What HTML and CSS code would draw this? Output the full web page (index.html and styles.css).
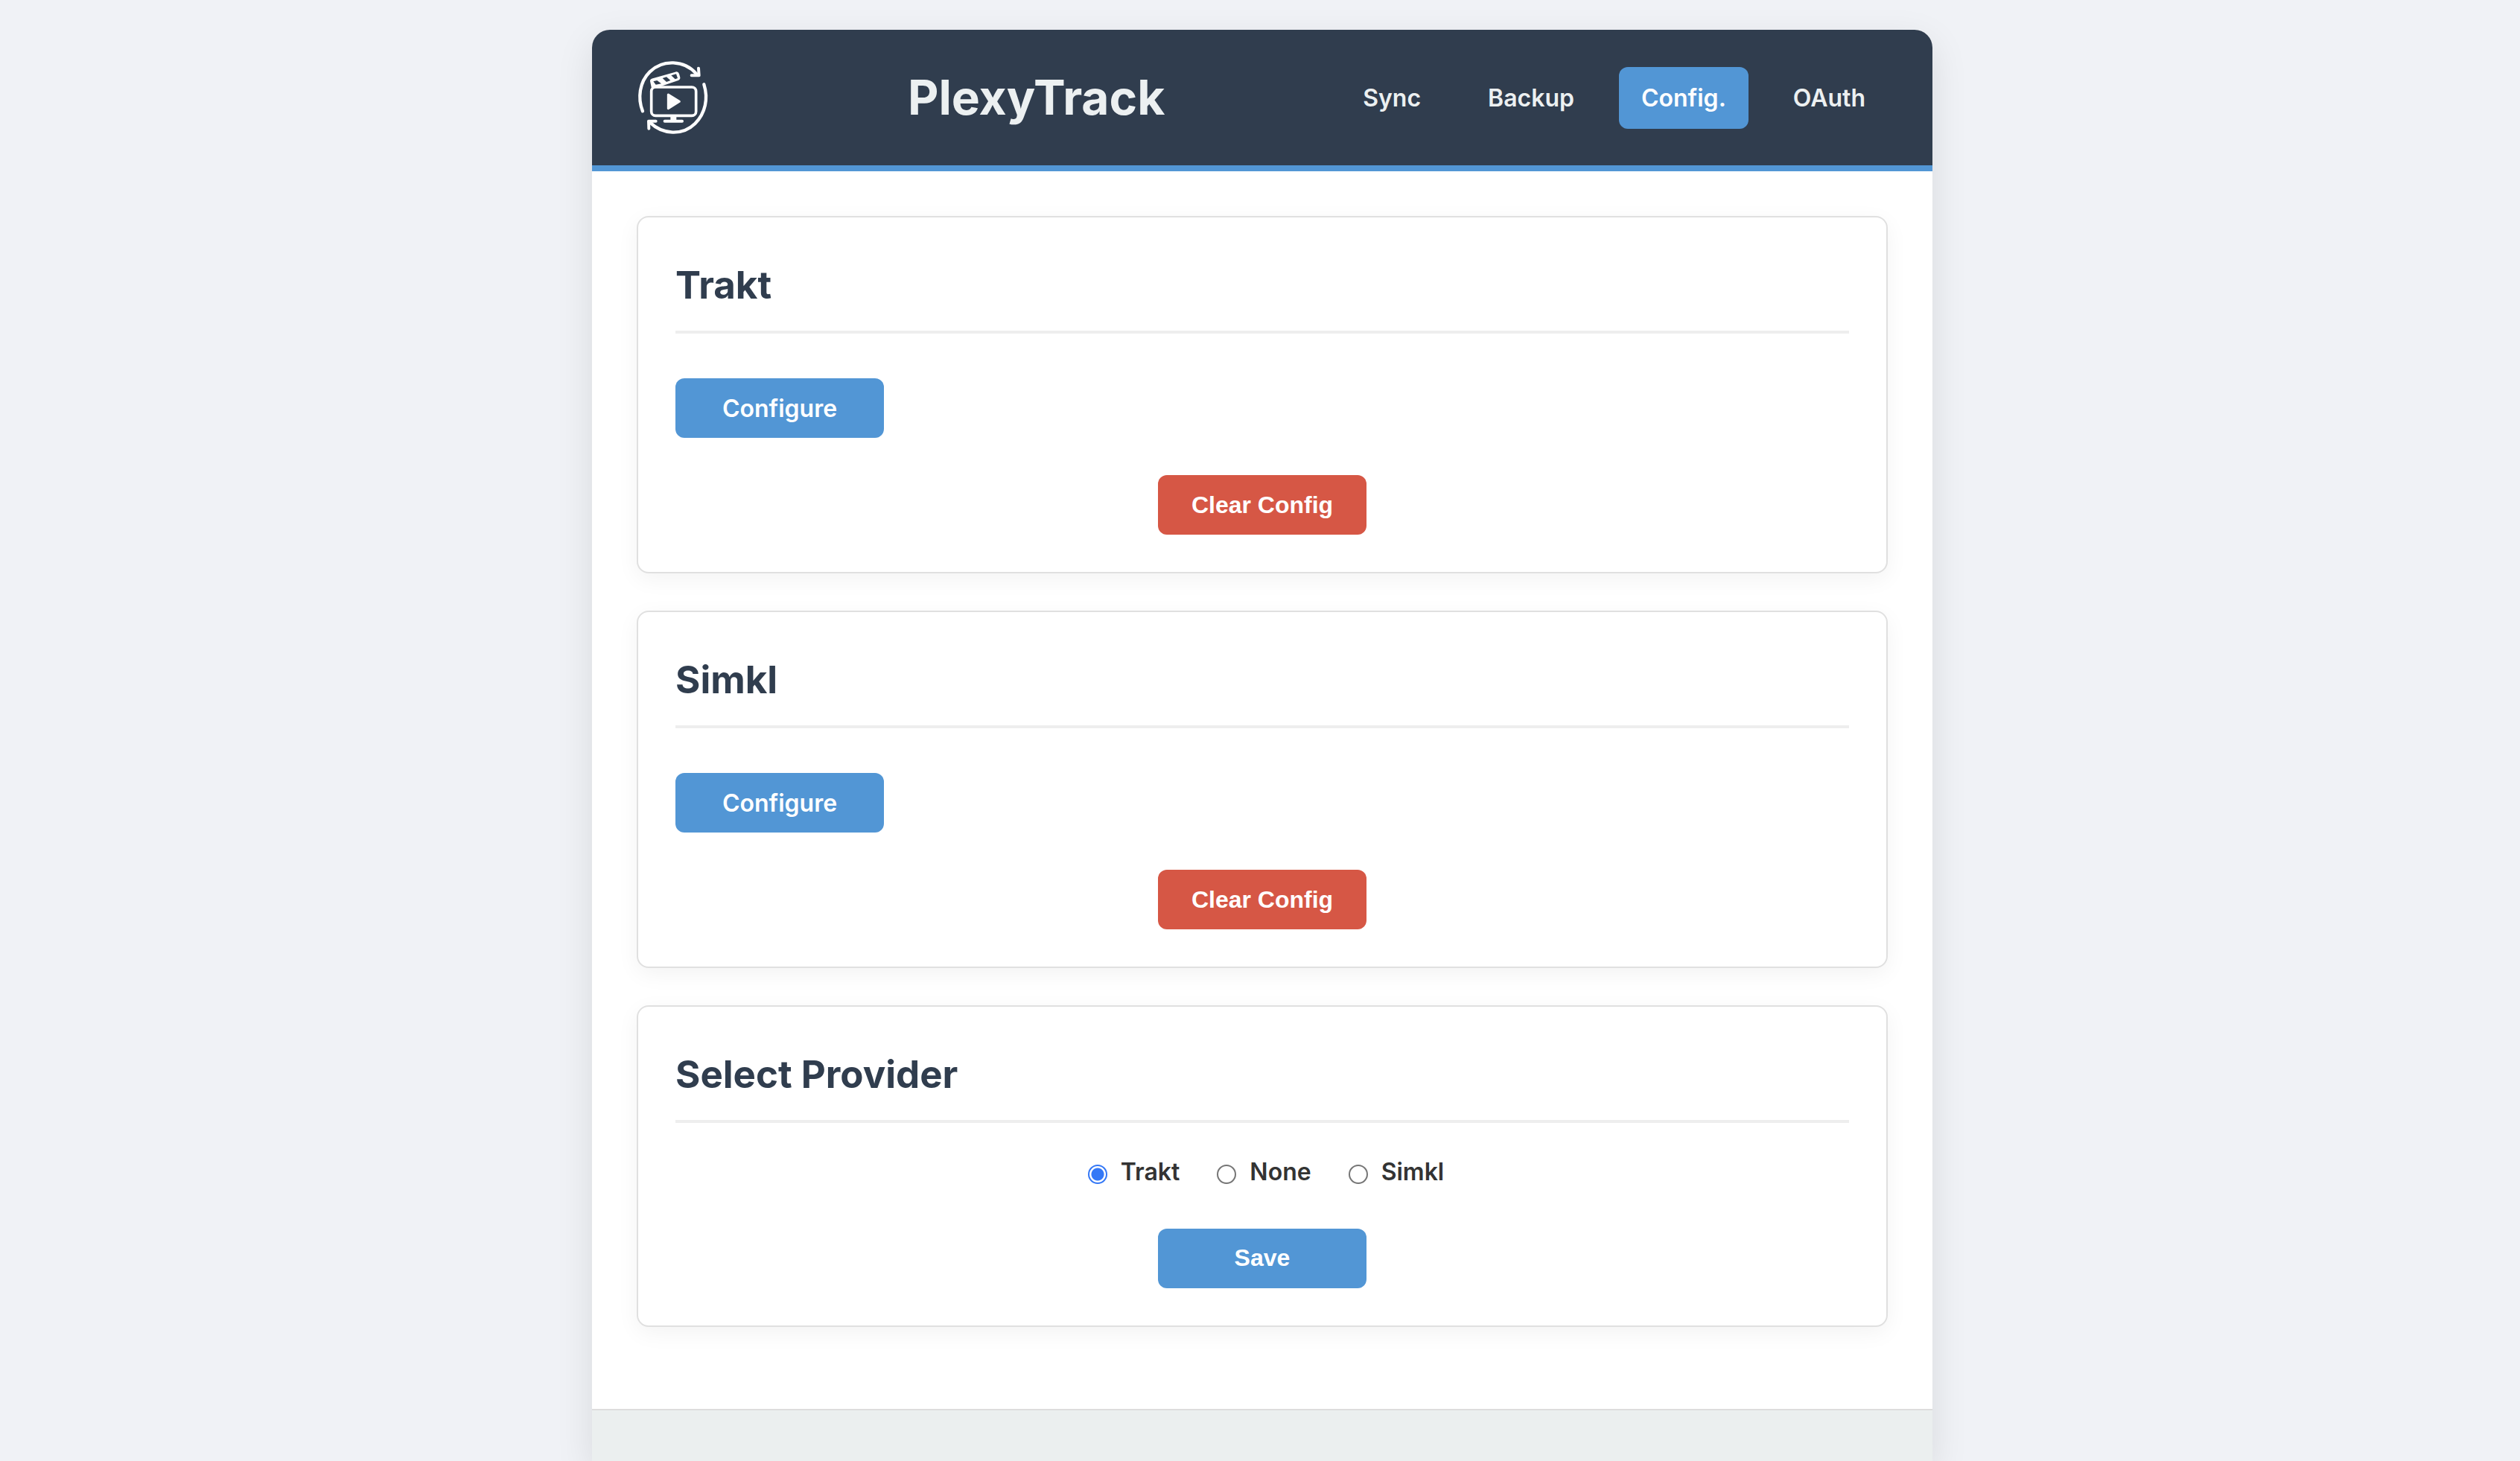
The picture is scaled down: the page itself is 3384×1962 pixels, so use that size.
FILE: index.html
```html
<!DOCTYPE html>
<html lang="en">
<head>
  <meta charset="utf-8">
  <meta name="viewport" content="width=device-width, initial-scale=1">
  <title>PlexyTrack</title>
  <link rel="stylesheet" href="styles.css">
</head>
<body>
  <div class="container">
    <header class="header">
      <svg class="logo" viewBox="45 33 300 300" fill="none" stroke="#fdfdfd" stroke-linecap="round" stroke-linejoin="round" aria-hidden="true">
        <g stroke-width="13">
          <path d="M69 238C48 186 56 120 98 79C150 29 236 31 286 88"/>
          <path d="M316 130C334 187 322 245 280 288C229 338 149 332 99 284"/>
        </g>
        <path stroke-width="12" d="M294 65L296 94H266M94 308L93 278H122"/>
        <rect x="104" y="141" width="180" height="115" rx="17" stroke-width="11"/>
        <path d="M172 171L217 199L172 227Z" fill="#fdfdfd" stroke-width="9"/>
        <path stroke-width="24" stroke-linecap="butt" d="M193 258V277"/>
        <path stroke-width="12" d="M158 278H228"/>
        <path stroke-width="8" fill="#fdfdfd" d="M108 141L103 117Q102 112 108 110L204 83Q210 82 212 88L216 102Q217 108 211 110L132 137Z"/>
        <path fill="#303d4e" stroke="none" d="M112 118L127 114L144 127L122 131ZM149 105L165 100L181 114L165 120ZM184 94L204 88L210 105L200 109Z"/>
      </svg>
      <h1 class="title">PlexyTrack</h1>
      <nav class="nav">
        <a href="#sync">Sync</a>
        <a href="#backup">Backup</a>
        <a href="#config" class="active" aria-current="page">Config.</a>
        <a href="#oauth">OAuth</a>
      </nav>
    </header>
    <main class="main">
      <section class="card">
        <h2>Trakt</h2>
        <a class="btn configure" href="#trakt">Configure</a>
        <button class="btn danger" type="button">Clear Config</button>
      </section>
      <section class="card">
        <h2>Simkl</h2>
        <a class="btn configure" href="#simkl">Configure</a>
        <button class="btn danger" type="button">Clear Config</button>
      </section>
      <section class="card">
        <h2>Select Provider</h2>
        <form class="provider">
          <div class="options">
            <label><input type="radio" name="provider" value="trakt" checked>Trakt</label>
            <label><input type="radio" name="provider" value="none">None</label>
            <label><input type="radio" name="provider" value="simkl">Simkl</label>
          </div>
          <button class="btn" type="button">Save</button>
        </form>
      </section>
    </main>
    <footer class="footer"></footer>
  </div>
</body>
</html>
```
FILE: styles.css
```css
* {
  box-sizing: border-box;
}

body {
  margin: 0;
  padding: 40px 20px 0 26px;
  background: #f0f2f6;
  color: #333;
  font-family: Inter, "Liberation Sans", sans-serif;
  font-size: 32px;
  line-height: 1.6;
}

.container {
  display: flex;
  flex-direction: column;
  max-width: 1800px;
  min-height: calc(100vh - 40px);
  margin: 0 auto;
  background: #fff;
  border-radius: 24px 24px 0 0;
  box-shadow: 0 16px 50px rgba(0, 0, 0, 0.1);
  overflow: hidden;
}

.header {
  display: flex;
  align-items: center;
  justify-content: space-between;
  padding: 40px 60px;
  background: #303d4e;
  border-bottom: 8px solid #5296d5;
}

.logo {
  width: 100px;
  height: 100px;
  margin-right: 28px;
}

.title {
  margin: 0;
  color: #ecf0f1;
  font-size: 64px;
  font-weight: 700;
}

.nav {
  display: flex;
  gap: 30px;
}

.nav a {
  padding: 16px 30px;
  border-radius: 12px;
  color: #ecf0f1;
  font-weight: 600;
  text-decoration: none;
}

.nav .active {
  background: #5296d5;
  color: #fff;
}

.main {
  display: flex;
  flex-direction: column;
  gap: 50px;
  padding: 60px 60px 110px;
}

.card {
  display: flex;
  flex-direction: column;
  align-items: center;
  padding: 50px;
  background: #fff;
  border: 2px solid #e0e0e0;
  border-radius: 16px;
  box-shadow: 0 8px 30px rgba(0, 0, 0, 0.05);
}

.card h2 {
  align-self: stretch;
  margin: 0;
  padding-bottom: 20px;
  border-bottom: 4px solid #eee;
  color: #303d4e;
  font-size: 51px;
  font-weight: 700;
  line-height: 82px;
}

.btn {
  display: flex;
  align-items: center;
  justify-content: center;
  width: 280px;
  height: 80px;
  border: 0;
  border-radius: 12px;
  background: #5296d5;
  color: #fff;
  font-family: "Liberation Sans", Arial, sans-serif;
  font-size: 32px;
  font-weight: 600;
  text-decoration: none;
}

.configure {
  align-self: flex-start;
  margin: 60px 0 50px;
  font-family: Inter, "Liberation Sans", sans-serif;
}

.danger {
  background: #d65745;
}

.provider {
  display: flex;
  flex-direction: column;
  align-items: center;
  gap: 50px;
  margin-top: 40px;
}

.options {
  display: flex;
  gap: 40px;
}

.options label {
  display: flex;
  align-items: center;
  font-weight: 600;
}

.options input {
  appearance: none;
  width: 26px;
  height: 26px;
  margin: 6px 18px 0 10px;
  border: 2px solid #767676;
  border-radius: 50%;
  background: #fff;
}

.options input:checked {
  border-color: #3478f6;
  background: radial-gradient(circle, #3478f6 8px, #fff 9px);
}

.footer {
  flex: 1;
  background: #ebefef;
  border-top: 2px solid #ddd;
}
```
